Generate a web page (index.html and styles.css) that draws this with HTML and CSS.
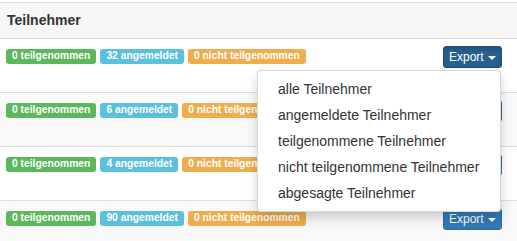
FILE: index.html
```
<!DOCTYPE html>
<html lang="de">
<head>
    <meta charset="UTF-8">
    <title>Teilnehmer</title>
    <link rel="stylesheet" href="styles.css">
</head>
<body>
    <div class="panel">
        <div class="panel-heading">Teilnehmer</div>

        <div class="entry">
            <div class="labels">
                <span class="label label-success">0 teilgenommen</span>
                <span class="label label-info">32 angemeldet</span>
                <span class="label label-warning">0 nicht teilgenommen</span>
            </div>
            <div class="btn-group open">
                <button class="btn btn-primary">Export <span class="caret"></span></button>
                <ul class="dropdown-menu">
                    <li>alle Teilnehmer</li>
                    <li>angemeldete Teilnehmer</li>
                    <li>teilgenommene Teilnehmer</li>
                    <li>nicht teilgenommene Teilnehmer</li>
                    <li>abgesagte Teilnehmer</li>
                </ul>
            </div>
        </div>

        <div class="entry striped">
            <div class="labels">
                <span class="label label-success">0 teilgenommen</span>
                <span class="label label-info">6 angemeldet</span>
                <span class="label label-warning">0 nicht teilgenommen</span>
            </div>
            <div class="btn-group">
                <button class="btn btn-primary">Export <span class="caret"></span></button>
            </div>
        </div>

        <div class="entry">
            <div class="labels">
                <span class="label label-success">0 teilgenommen</span>
                <span class="label label-info">4 angemeldet</span>
                <span class="label label-warning">0 nicht teilgenommen</span>
            </div>
            <div class="btn-group">
                <button class="btn btn-primary">Export <span class="caret"></span></button>
            </div>
        </div>

        <div class="entry striped">
            <div class="labels">
                <span class="label label-success">0 teilgenommen</span>
                <span class="label label-info">90 angemeldet</span>
                <span class="label label-warning">0 nicht teilgenommen</span>
            </div>
            <div class="btn-group">
                <button class="btn btn-primary">Export <span class="caret"></span></button>
            </div>
        </div>
    </div>
</body>
</html>
```

FILE: styles.css
```
body {
    margin: 0;
    padding-top: 2px;
    font-family: 'Liberation Sans', Arial, sans-serif;
    font-size: 14px;
    color: #333;
    background: #fff;
}
.panel {
    border-top: 1px solid #ddd;
}
.panel-heading {
    background: #f7f7f7;
    border-bottom: 1px solid #ddd;
    padding: 0 7px;
    height: 35px;
    line-height: 35px;
    font-weight: bold;
    font-size: 14px;
}
.entry {
    display: flex;
    justify-content: space-between;
    align-items: flex-start;
    height: 53px;
    padding: 0 15px 0 6px;
    border-bottom: 1px solid #ddd;
}
.entry.striped {
    background: #f9f9f9;
}
.labels {
    display: flex;
    gap: 4px;
    padding-top: 10px;
}
.label {
    display: inline-block;
    font-size: 10.3px;
    font-weight: bold;
    line-height: 1;
    color: #fff;
    padding: 2px 6px 3px;
    border-radius: 3px;
    white-space: nowrap;
}
.label-success { background: #5cb85c; }
.label-info { background: #5bc0de; }
.label-warning { background: #f0ad4e; }
.btn-group {
    position: relative;
    margin-top: 7px;
}
.btn {
    font-family: inherit;
    font-size: 12px;
    line-height: 18px;
    padding: 1px 5px;
    border-radius: 3px;
    border: 1px solid transparent;
    cursor: pointer;
}
.btn-primary {
    color: #fff;
    background: #337ab7;
    border-color: #2e6da4;
}
.open .btn-primary {
    background: #286090;
    border-color: #204d74;
    box-shadow: inset 0 3px 5px rgba(0, 0, 0, 0.125);
}
.caret {
    display: inline-block;
    width: 0;
    height: 0;
    margin-left: 1px;
    vertical-align: middle;
    border-top: 4px solid;
    border-left: 4px solid transparent;
    border-right: 4px solid transparent;
}
.dropdown-menu {
    position: absolute;
    top: 100%;
    right: 1px;
    z-index: 10;
    box-sizing: border-box;
    min-width: 244px;
    margin: 2px 0 0;
    padding: 5px 0;
    list-style: none;
    background: #fff;
    border: 1px solid rgba(0, 0, 0, 0.15);
    border-radius: 4px;
    box-shadow: 0 6px 12px rgba(0, 0, 0, 0.175);
    white-space: nowrap;
}
.dropdown-menu li {
    padding: 3px 20px;
    line-height: 20px;
    font-size: 14px;
    color: #333;
}
```
